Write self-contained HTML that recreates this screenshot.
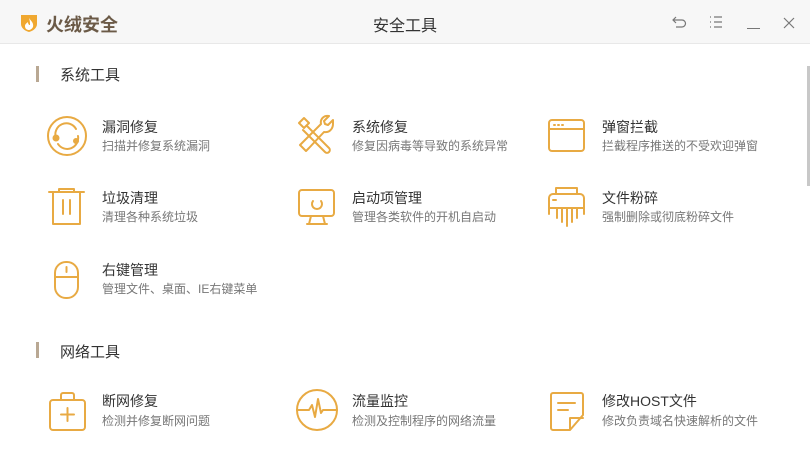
<!DOCTYPE html><html><head><meta charset="utf-8"><style>
body{margin:0;width:810px;height:470px;background:#fff;font-family:"Liberation Sans","Noto Sans CJK SC",sans-serif;position:relative;overflow:hidden}
.hd{position:absolute;left:0;top:0;width:810px;height:43px;background:#f7f7f7;border-bottom:1px solid #e8e8e8}
.t{position:absolute;font-size:14px;color:#333;white-space:nowrap}
.d{position:absolute;font-size:12px;color:#777;white-space:nowrap}
.sec{position:absolute;font-size:15px;color:#333}
.bar{position:absolute;left:36px;width:3px;height:16px;background:#b9a893}
svg.i{position:absolute;width:44px;height:44px;fill:none;stroke:#e8aa43;stroke-width:2;stroke-linecap:round;stroke-linejoin:round}
</style></head><body>
<div class="hd">
<svg style="position:absolute;left:19px;top:13px" width="20" height="20" viewBox="0 0 20 20"><path d="M2 2h16v9c0 4-4 7-8 8-4-1-8-4-8-8z" fill="#f0a830"/><path d="M10 5c2 3 5 5 4 9-1 2-3 3-4 3-2 0-4-1-4-4 0-2 2-3 3-4 0 2 1 3 2 3 0-2 0-4-1-7z" fill="#fff"/></svg>
<div style="position:absolute;left:46px;top:11px;font-size:18px;font-weight:bold;color:#6b5a47">火绒安全</div>
<div style="position:absolute;left:0;width:810px;text-align:center;top:12px;font-size:16px;color:#333">安全工具</div>
<svg style="position:absolute;left:672px;top:15px" width="16" height="14" viewBox="0 0 16 14" fill="none" stroke="#777" stroke-width="1.2"><path d="M4 2L1 5l3 3M1 5h9a3.5 3.5 0 010 7H4"/></svg>
<svg style="position:absolute;left:709px;top:16px" width="14" height="12" viewBox="0 0 14 12" fill="none" stroke="#777" stroke-width="1.2"><path d="M1 1h1M1 6h1M1 11h1M5 1h8M5 6h8M5 11h8"/></svg>
<div style="position:absolute;left:747px;top:28px;width:13px;height:1.3px;background:#777"></div>
<svg style="position:absolute;left:783px;top:17px" width="12" height="12" viewBox="0 0 12 12" stroke="#777" stroke-width="1.2"><path d="M1 1l10 10M11 1L1 11"/></svg>
</div>
<div style="position:absolute;left:807px;top:66px;width:3px;height:120px;background:#c8c8c8"></div>

<div class="bar" style="top:66px"></div><div class="sec" style="left:60px;top:64px">系统工具</div>
<div class="bar" style="top:342px"></div><div class="sec" style="left:60px;top:341px">网络工具</div>

<svg class="i" style="left:45px;top:114px" viewBox="0 0 44 44"><circle cx="22" cy="22" r="19"/><path d="M11 24a11 11 0 0 1 20-9M33 22a11 11 0 0 1-20 8"/><circle cx="11" cy="24" r="2.5" fill="#e8aa43"/><circle cx="31" cy="27" r="2" fill="#e8aa43"/></svg>
<div class="t" style="left:102px;top:117px">漏洞修复</div><div class="d" style="left:102px;top:137px">扫描并修复系统漏洞</div>

<svg class="i" style="left:295px;top:114px" viewBox="0 0 44 44"><path d="M4 9l5-5 5 5-5 5zM12 12l22 22a2.5 2.5 0 0 1-4 4L8 16"/><path d="M38 6l-5 5-3-1-1-3 5-5c-5-1-9 3-8 8L8 28l-3 3 6 6 3-3 15-16c5 1 9-3 9-8z"/></svg>
<div class="t" style="left:352px;top:117px">系统修复</div><div class="d" style="left:352px;top:137px">修复因病毒等导致的系统异常</div>

<svg class="i" style="left:545px;top:114px" viewBox="0 0 44 44"><rect x="4" y="6" width="35" height="31" rx="3"/><path d="M4 15h35M9 11h1M13 11h1M17 11h1"/></svg>
<div class="t" style="left:602px;top:117px">弹窗拦截</div><div class="d" style="left:602px;top:137px">拦截程序推送的不受欢迎弹窗</div>

<svg class="i" style="left:45px;top:186px" viewBox="0 0 44 44"><path d="M4 6h35M14 6V3h15v3M8 6v32h27V6M18 14v14M25 14v14"/></svg>
<div class="t" style="left:102px;top:188px">垃圾清理</div><div class="d" style="left:102px;top:208px">清理各种系统垃圾</div>

<svg class="i" style="left:295px;top:186px" viewBox="0 0 44 44"><rect x="4" y="4" width="35" height="26" rx="3"/><path d="M16 30l-2 8M28 30l2 8M12 38h20"/><path d="M26 15a5 5 0 1 1-8 0"/></svg>
<div class="t" style="left:352px;top:188px">启动项管理</div><div class="d" style="left:352px;top:208px">管理各类软件的开机自启动</div>

<svg class="i" style="left:545px;top:186px" viewBox="0 0 44 44"><path d="M11 8V2h21v6M4 28V12a4 4 0 0 1 4-4h27a4 4 0 0 1 4 4v16M8 14h3M12 22v10M17 22v14M22 22v18M27 22v14M32 22v10M4 22h35"/></svg>
<div class="t" style="left:602px;top:188px">文件粉碎</div><div class="d" style="left:602px;top:208px">强制删除或彻底粉碎文件</div>

<svg class="i" style="left:45px;top:258px" viewBox="0 0 44 44"><rect x="10" y="4" width="23" height="36" rx="11"/><path d="M21.5 9v5M10 19h23"/></svg>
<div class="t" style="left:102px;top:260px">右键管理</div><div class="d" style="left:102px;top:280px">管理文件、桌面、IE右键菜单</div>

<svg class="i" style="left:45px;top:390px" viewBox="0 0 44 44"><path d="M16 10V5a2 2 0 0 1 2-2h9a2 2 0 0 1 2 2v5"/><rect x="5" y="10" width="35" height="30" rx="3"/><path d="M22.5 18v13M16 24.5h13"/></svg>
<div class="t" style="left:102px;top:391px">断网修复</div><div class="d" style="left:102px;top:412px">检测并修复断网问题</div>

<svg class="i" style="left:295px;top:388px" viewBox="0 0 44 44"><circle cx="22" cy="22" r="20"/><path d="M2 22h12l3-5 3 12 3-18 3 14 2-3h14"/></svg>
<div class="t" style="left:352px;top:391px">流量监控</div><div class="d" style="left:352px;top:412px">检测及控制程序的网络流量</div>

<svg class="i" style="left:547px;top:390px" viewBox="0 0 44 44"><path d="M6 3h28a2 2 0 0 1 2 2v20l-13 15H6a2 2 0 0 1-2-2V5a2 2 0 0 1 2-2zM23 40V28h13M11 13h17M11 20h10"/></svg>
<div class="t" style="left:602px;top:391px">修改HOST文件</div><div class="d" style="left:602px;top:412px">修改负责域名快速解析的文件</div>
</body></html>
